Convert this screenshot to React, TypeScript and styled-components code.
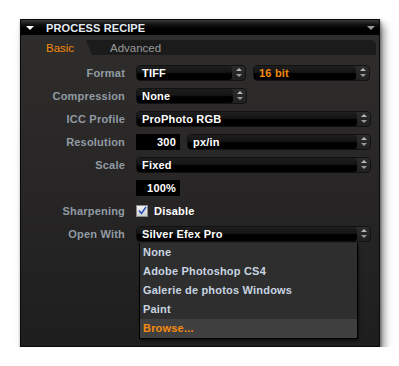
import React from "react";
import styled, { createGlobalStyle } from "styled-components";

const GlobalStyle = createGlobalStyle`
	body {
		margin: 0;
		background: #ffffff;
		font-family: "Liberation Sans", Arial, sans-serif;
	}
`;

const Page = styled.div`
	padding: 19px 0 0 20px;
`;

const Panel = styled.div`
	position: relative;
	width: 360px;
	height: 328px;
	box-sizing: border-box;
	border: 1px solid #0a0a0a;
	background: linear-gradient(#302e2d, #1f1e1e);
	box-shadow: 4px 6px 8px rgba(0, 0, 0, 0.45), 1px 2px 3px rgba(0, 0, 0, 0.4);
`;

const Header = styled.div`
	height: 15px;
	display: flex;
	align-items: center;
	padding: 0 4px 0 5px;
	background: linear-gradient(#3a3a3a 0, #121212 30%, #000 60%);
	color: #e4ebf2;
	font-size: 11px;
	font-weight: bold;
`;

const HeaderTitle = styled.span`
	flex: 1;
	margin-left: 12px;
	letter-spacing: 0.1px;
`;

const Triangle = styled.span<{ $color: string; $up?: boolean; $size?: number }>`
	width: 0;
	height: 0;
	border-left: ${p => p.$size ?? 4}px solid transparent;
	border-right: ${p => p.$size ?? 4}px solid transparent;
	${p =>
		p.$up
			? `border-bottom: ${p.$size ?? 4}px solid ${p.$color};`
			: `border-top: ${p.$size ?? 4}px solid ${p.$color};`}
`;

const TabStrip = styled.div`
	padding: 5px 3px 0;
`;

const TabBar = styled.div`
	display: flex;
	height: 15px;
	background: #1b1b1b;
	border-radius: 5px 5px 0 0;
	font-size: 11.5px;
`;

const Tab = styled.div<{ $active?: boolean }>`
	display: flex;
	align-items: center;
	color: ${p => (p.$active ? "#f48a0c" : "#9a9a9a")};
	${p =>
		p.$active
			? `
		width: 68px;
		padding-left: 22px;
		box-sizing: border-box;
		background: #2d2c2b;
		border-radius: 5px 0 0 0;
		clip-path: polygon(0 0, 62px 0, 68px 100%, 0 100%);
	`
			: `padding-left: 18px;`}
`;

const Form = styled.div`
	padding: 6px 8px 0 0;
`;

const Row = styled.div`
	display: grid;
	grid-template-columns: 104px 1fr;
	column-gap: 11px;
	height: 23px;
	align-items: center;
	font-size: 11px;
	font-weight: bold;
	letter-spacing: 0.2px;
`;

const Label = styled.div`
	text-align: right;
	color: #919ba4;
`;

const Controls = styled.div`
	display: flex;
	align-items: center;
	gap: 7px;
	position: relative;
`;

const Select = styled.div<{ $width?: number }>`
	display: flex;
	height: 16px;
	box-sizing: border-box;
	${p => (p.$width ? `width: ${p.$width}px;` : "flex: 1;")}
	border-radius: 4px;
	background: linear-gradient(#2c2c2c, #202020);
	border: 1px solid #111;
`;

const SelectValue = styled.div<{ $accent?: boolean }>`
	flex: 1;
	display: flex;
	align-items: center;
	padding-left: 5px;
	border-radius: 3px;
	background: linear-gradient(#1e1e1e 0, #151515 45%, #000 55%, #000 100%);
	color: ${p => (p.$accent ? "#f48a0c" : "#ffffff")};
	white-space: nowrap;
	overflow: hidden;
`;

const Spinner = styled.div`
	width: 13px;
	display: flex;
	flex-direction: column;
	align-items: center;
	justify-content: center;
	gap: 3px;
`;

const NumberBox = styled.div`
	width: 44px;
	height: 16px;
	box-sizing: border-box;
	background: #000;
	color: #fff;
	display: flex;
	align-items: center;
	justify-content: flex-end;
	padding-right: 4px;
`;

const Check = styled.span`
	width: 12px;
	height: 12px;
	box-sizing: border-box;
	border: 1px solid #8b8b8b;
	background: linear-gradient(#f4f4f4, #cfcfcf);
	display: flex;
	align-items: center;
	justify-content: center;
`;

const CheckText = styled.span`
	color: #ffffff;
	margin-left: -1px;
`;

const DropList = styled.div`
	position: absolute;
	left: 3px;
	top: 17px;
	width: 217px;
	border: 1px solid #000;
	border-top: none;
	background: #2e2e2e;
	box-shadow: 1px 2px 2px rgba(0, 0, 0, 0.5);
	z-index: 2;
`;

const DropItem = styled.div<{ $active?: boolean }>`
	height: 19px;
	display: flex;
	align-items: center;
	padding-left: 3px;
	color: ${p => (p.$active ? "#f48a0c" : "#c8d5e1")};
	background: ${p => (p.$active ? "#404040" : "transparent")};
`;

function Arrows() {
	return (
		<Spinner>
			<Triangle $color="#b8b8b8" $size={3} $up />
			<Triangle $color="#9a9a9a" $size={3} />
		</Spinner>
	);
}

function Dropdown({ value, width, accent }: { value: string; width?: number; accent?: boolean }) {
	return (
		<Select $width={width}>
			<SelectValue $accent={accent}>{value}</SelectValue>
			<Arrows />
		</Select>
	);
}

const openWithItems = ["None", "Adobe Photoshop CS4", "Galerie de photos Windows", "Paint", "Browse..."];

export default function App() {
	return (
		<Page>
			<GlobalStyle />
			<Panel>
				<Header>
					<Triangle $color="#ffffff" />
					<HeaderTitle>PROCESS RECIPE</HeaderTitle>
					<Triangle $color="#9a9a9a" />
				</Header>
				<TabStrip>
					<TabBar>
						<Tab $active>Basic</Tab>
						<Tab>Advanced</Tab>
					</TabBar>
				</TabStrip>
				<Form>
					<Row>
						<Label>Format</Label>
						<Controls>
							<Dropdown value="TIFF" width={110} />
							<Dropdown value="16 bit" width={117} accent />
						</Controls>
					</Row>
					<Row>
						<Label>Compression</Label>
						<Controls>
							<Dropdown value="None" width={111} />
						</Controls>
					</Row>
					<Row>
						<Label>ICC Profile</Label>
						<Controls>
							<Dropdown value="ProPhoto RGB" />
						</Controls>
					</Row>
					<Row>
						<Label>Resolution</Label>
						<Controls>
							<NumberBox>300</NumberBox>
							<Dropdown value="px/in" />
						</Controls>
					</Row>
					<Row>
						<Label>Scale</Label>
						<Controls>
							<Dropdown value="Fixed" />
						</Controls>
					</Row>
					<Row>
						<Label />
						<Controls>
							<NumberBox>100%</NumberBox>
						</Controls>
					</Row>
					<Row>
						<Label>Sharpening</Label>
						<Controls>
							<Check>
								<svg width="9" height="9" viewBox="0 0 9 9">
									<path d="M1 4.5 L3.5 7.5 L8 1" fill="none" stroke="#2a55b8" strokeWidth="1.6" />
								</svg>
							</Check>
							<CheckText>Disable</CheckText>
						</Controls>
					</Row>
					<Row>
						<Label>Open With</Label>
						<Controls>
							<Dropdown value="Silver Efex Pro" />
							<DropList>
								{openWithItems.map((item, i) => (
									<DropItem key={item} $active={i === openWithItems.length - 1}>
										{item}
									</DropItem>
								))}
							</DropList>
						</Controls>
					</Row>
				</Form>
			</Panel>
		</Page>
	);
}
